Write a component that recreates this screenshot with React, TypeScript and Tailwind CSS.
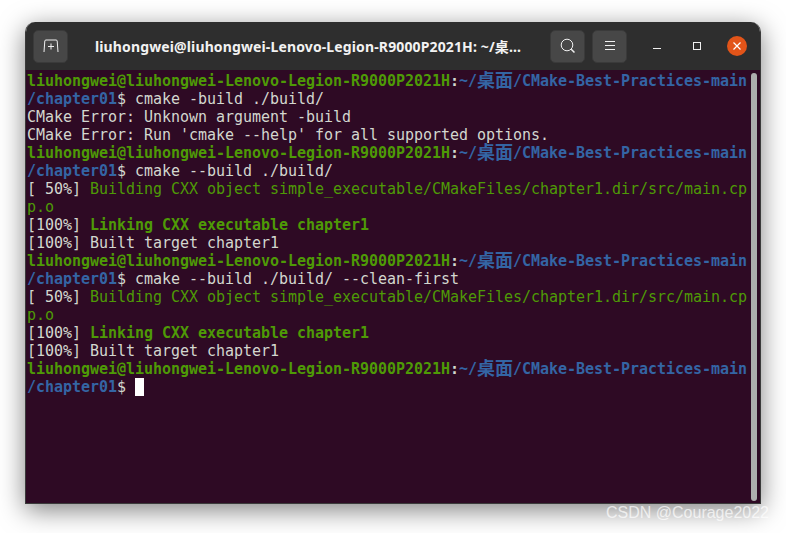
import React from "react";

const G = ({ children }: { children: React.ReactNode }) => <span className="font-bold text-[#4e9a06]">{children}</span>;
const B = ({ children }: { children: React.ReactNode }) => <span className="font-bold text-[#3465a4]">{children}</span>;
const N = ({ children }: { children: React.ReactNode }) => <span className="text-[#4e9a06]">{children}</span>;

const Line = ({ children }: { children?: React.ReactNode }) => (
  <div className="h-[18px] leading-[18px] whitespace-pre">{children}</div>
);

const Prompt = () => (
  <Line>
    <G>liuhongwei@liuhongwei-Lenovo-Legion-R9000P2021H</G>
    <span className="font-bold">:</span>
    <B>~/</B>
    <span className="inline-block w-[36px] align-top font-bold text-[18px] leading-[15px] text-[#3465a4] [font-family:'Noto_Sans_CJK_SC',sans-serif]">桌面</span>
    <B>/CMake-Best-Practices-main</B>
  </Line>
);

const Sub = ({ children }: { children?: React.ReactNode }) => (
  <Line>
    <B>/chapter01</B>
    {children}
  </Line>
);

const HeaderButton = ({ children }: { children: React.ReactNode }) => (
  <div className="flex h-[33px] w-[35px] items-center justify-center rounded-[5px] border border-[#3a3a3a] bg-[#474747]">
    {children}
  </div>
);

export default function App() {
  return (
    <div className="relative h-[533px] w-[786px] overflow-hidden bg-white pl-[25px] pt-[22px]">
      <div className="flex h-[482px] w-[736px] flex-col overflow-hidden rounded-t-[10px] border border-t-0 border-[#3a3a3a] shadow-[0_6px_26px_rgba(0,0,0,0.5)]">
        <div className="flex h-[48px] shrink-0 items-center bg-[#2e2e2e] pl-[7px] pr-[13px]">
          <HeaderButton>
            <svg width="16" height="14" viewBox="0 0 16 14" fill="none" stroke="#f0f0f0" strokeWidth="1">
              <path d="M1 13 L1.8 2 Q1.9 1 3 1 H13 Q14.1 1 14.2 2 L15 13" />
              <path d="M8 4.5 V10.5 M5 7.5 H11" />
            </svg>
          </HeaderButton>
          <div className="ml-[27px] w-[427px] shrink-0 whitespace-nowrap text-[14px] tracking-[0.13px] font-bold text-[#f2f2f2] [font-family:'Noto_Sans','Noto_Sans_CJK_SC',sans-serif]">
            liuhongwei@liuhongwei-Lenovo-Legion-R9000P2021H: ~/桌...
          </div>
          <div className="ml-[28px]">
            <HeaderButton>
              <svg width="16" height="16" viewBox="0 0 16 16" fill="none" stroke="#f0f0f0" strokeWidth="1">
                <circle cx="7" cy="7" r="5.8" />
                <path d="M11.2 11.2 L14.5 14.5" strokeWidth="1.5" />
              </svg>
            </HeaderButton>
          </div>
          <div className="ml-[7px]">
            <HeaderButton>
              <svg width="12" height="10" viewBox="0 0 12 10" stroke="#f0f0f0" strokeWidth="1">
                <path d="M1 .5 H11 M1 4.5 H11 M1 8.5 H11" />
              </svg>
            </HeaderButton>
          </div>
          <div className="ml-auto flex items-center">
            <svg width="10" height="10" viewBox="0 0 10 10" stroke="#f0f0f0" strokeWidth="1" className="mr-[30px]">
              <path d="M1 7.5 H9" />
            </svg>
            <svg width="10" height="10" viewBox="0 0 10 10" fill="none" stroke="#f0f0f0" strokeWidth="1" className="mr-[25px]">
              <rect x="1.5" y="1.5" width="7" height="7" />
            </svg>
            <div className="flex h-[20px] w-[20px] items-center justify-center rounded-full bg-[#e25419]">
              <svg width="8" height="8" viewBox="0 0 8 8" stroke="#ffffff" strokeWidth="1.2">
                <path d="M.5 .5 L7.5 7.5 M7.5 .5 L.5 7.5" />
              </svg>
            </div>
          </div>
        </div>
        <div className="relative min-h-0 flex-1 bg-[#2e0a24] pl-[1px] pt-[2px] text-[15px] tracking-[-0.03px] text-[#d3d7cf] [font-family:'DejaVu_Sans_Mono',monospace]">
          <Prompt />
          <Sub>$ cmake -build ./build/</Sub>
          <Line>CMake Error: Unknown argument -build</Line>
          <Line>CMake Error: Run 'cmake --help' for all supported options.</Line>
          <Prompt />
          <Sub>$ cmake --build ./build/</Sub>
          <Line>[ 50%] <N>Building CXX object simple_executable/CMakeFiles/chapter1.dir/src/main.cp</N></Line>
          <Line><N>p.o</N></Line>
          <Line>[100%] <G>Linking CXX executable chapter1</G></Line>
          <Line>[100%] Built target chapter1</Line>
          <Prompt />
          <Sub>$ cmake --build ./build/ --clean-first</Sub>
          <Line>[ 50%] <N>Building CXX object simple_executable/CMakeFiles/chapter1.dir/src/main.cp</N></Line>
          <Line><N>p.o</N></Line>
          <Line>[100%] <G>Linking CXX executable chapter1</G></Line>
          <Line>[100%] Built target chapter1</Line>
          <Prompt />
          <Sub>
            $ <span className="inline-block h-[18px] w-[9px] bg-white align-top" />
          </Sub>
          <div className="absolute bottom-[2px] right-[3px] top-[3px] w-[6px] rounded-full bg-[#adadad]" />
        </div>
      </div>
      <div className="absolute left-[606px] top-[504px] whitespace-nowrap text-[16px] leading-[18px] text-white/70 [font-family:'Liberation_Sans',sans-serif]">
        CSDN @Courage2022
      </div>
    </div>
  );
}
